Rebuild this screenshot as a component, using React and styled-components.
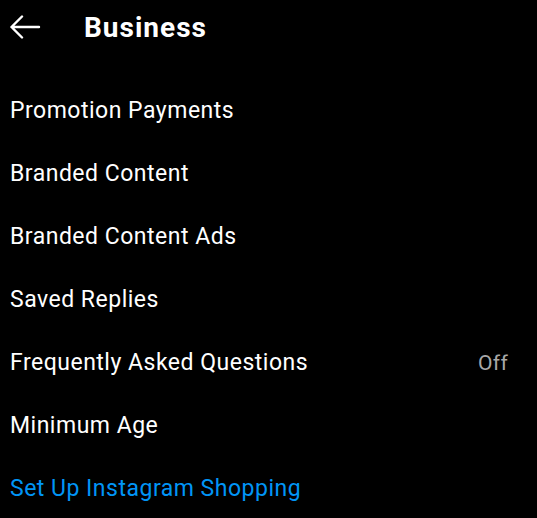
import React from 'react';
import styled, { createGlobalStyle } from 'styled-components';

const GlobalStyle = createGlobalStyle`
  html, body {
    margin: 0;
    padding: 0;
    background: #000;
  }
  body {
    font-family: Roboto, "Noto Sans", Arial, sans-serif;
    color: #fff;
  }
`;

const items = [
  { id: 'promo', label: 'Promotion Payments' },
  { id: 'branded', label: 'Branded Content' },
  { id: 'branded-ads', label: 'Branded Content Ads' },
  { id: 'replies', label: 'Saved Replies' },
  { id: 'faq', label: 'Frequently Asked Questions', value: 'Off' },
  { id: 'age', label: 'Minimum Age' },
  { id: 'shopping', label: 'Set Up Instagram Shopping', link: true },
];

function BackArrow() {
  return (
    <svg width="32" height="24" viewBox="0 0 32 24" fill="none">
      <path
        d="M30 12H2.5M13 1.5L2.5 12L13 22.5"
        stroke="#fff"
        strokeWidth="2.4"
        strokeLinecap="round"
        strokeLinejoin="round"
      />
    </svg>
  );
}

export default function App() {
  return (
    <styles.Page>
      <GlobalStyle />
      <styles.Header>
        <styles.Back>
          <BackArrow />
        </styles.Back>
        <styles.Title>Business</styles.Title>
      </styles.Header>
      <styles.List>
        {items.map(({ id, label, value, link }) => (
          <styles.Row key={id}>
            <styles.Label $link={link}>{label}</styles.Label>
            {value && <styles.Value>{value}</styles.Value>}
          </styles.Row>
        ))}
      </styles.List>
    </styles.Page>
  );
}

const styles = {
  Page: styled.div`
    width: 537px;
    height: 518px;
    background: #000;
    overflow: hidden;
  `,

  Header: styled.div`
    display: flex;
    align-items: center;
    height: 54px;
    padding-left: 9px;
  `,

  Back: styled.div`
    display: flex;
    align-items: center;
    width: 75px;
  `,

  Title: styled.h1`
    margin: 0;
    font-size: 28px;
    font-weight: 700;
    letter-spacing: 1px;
    color: #fff;
  `,

  List: styled.div`
    display: flex;
    flex-direction: column;
    padding-top: 25px;
  `,

  Row: styled.div`
    display: flex;
    align-items: center;
    justify-content: space-between;
    height: 63px;
    padding: 0 29px 0 10px;
  `,

  Label: styled.span`
    font-size: 23px;
    letter-spacing: 0.5px;
    color: ${({ $link }) => ($link ? '#0095f6' : '#fff')};
  `,

  Value: styled.span`
    font-size: 21px;
    letter-spacing: 0.3px;
    color: #a8a8a8;
  `,
};
